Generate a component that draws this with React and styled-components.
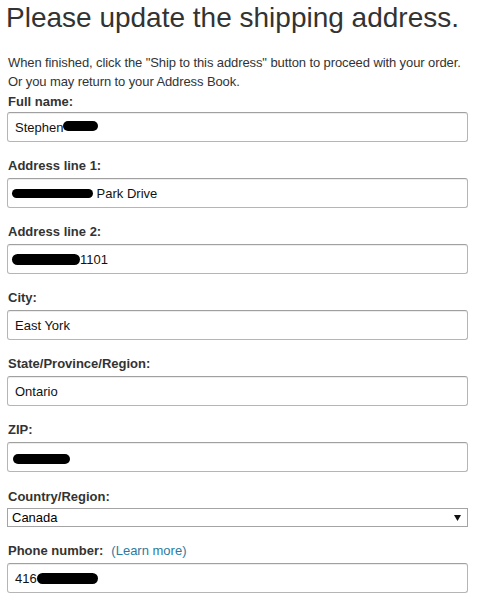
import React from 'react';
import styled, { createGlobalStyle } from 'styled-components';

const GlobalStyle = createGlobalStyle`
    body {
        margin: 0;
        background: #fff;
        font-family: "Liberation Sans", Arial, sans-serif;
        color: #333;
    }
`;

const Page = styled.div`
    padding: 0 20px 0 7px;
`;

const Title = styled.h1`
    margin: 1px 0 0 -1px;
    font-size: 28px;
    line-height: 34px;
    font-weight: 400;
    color: #333;
`;

const Intro = styled.p`
    margin: 18px 0 0 1px;
    font-size: 13px;
    line-height: 19px;
    letter-spacing: -0.1px;
    white-space: nowrap;
    color: #333;
`;

const Field = styled.div`
    margin-top: ${(p) => p.$top}px;
`;

const Label = styled.div`
    padding-left: 1px;
    margin-bottom: ${(p) => p.$mb}px;
    font-size: 13px;
    line-height: 19px;
    font-weight: 700;
    color: #333;
`;

const Link = styled.a`
    margin-left: 8px;
    font-weight: 400;
    color: #2d7aa0;
    text-decoration: none;
`;

const TextBox = styled.div`
    box-sizing: border-box;
    height: 30px;
    display: flex;
    align-items: center;
    padding: 0 7px;
    border: 1px solid #b5b5b5;
    border-top-color: #a0a0a0;
    border-radius: 3px;
    box-shadow: 0 1px 0 rgba(255, 255, 255, 0.5), inset 0 1px 0 rgba(0, 0, 0, 0.07);
    font-size: 13px;
    color: #111;
    white-space: pre;
`;

const Redact = styled.span`
    display: inline-block;
    width: ${(p) => p.$w}px;
    height: ${(p) => p.$h || 10}px;
    margin-top: ${(p) => p.$dy || 0}px;
    background: #000;
    border-radius: 6px;
`;

const Select = styled.div`
    box-sizing: border-box;
    height: 19px;
    display: flex;
    align-items: center;
    justify-content: space-between;
    padding: 0 6px 0 4px;
    border: 1px solid #a4a4a4;
    font-size: 13px;
    color: #000;
`;

function Arrow() {
    return (
        <svg width="7" height="6" viewBox="0 0 7 6">
            <polygon points="0,0 7,0 3.5,6" fill="#111" />
        </svg>
    );
}

function App() {
    return (
        <Page>
            <GlobalStyle />
            <Title>Please update the shipping address.</Title>
            <Intro>
                When finished, click the "Ship to this address" button to proceed with your order.
                <br />
                Or you may return to your Address Book.
            </Intro>

            <Field $top={1}>
                <Label $mb={1}>Full name:</Label>
                <TextBox>
                    Stephen<Redact $w={35} $dy={-2} />
                </TextBox>
            </Field>

            <Field $top={14}>
                <Label $mb={3}>Address line 1:</Label>
                <TextBox>
                    <Redact $w={81} $h={9} $dy={1} style={{ marginLeft: -3 }} /> Park Drive
                </TextBox>
            </Field>

            <Field $top={14}>
                <Label $mb={3}>Address line 2:</Label>
                <TextBox>
                    <Redact $w={68} $h={11} style={{ marginLeft: -3 }} />1101
                </TextBox>
            </Field>

            <Field $top={14}>
                <Label $mb={3}>City:</Label>
                <TextBox>East York</TextBox>
            </Field>

            <Field $top={14}>
                <Label $mb={3}>State/Province/Region:</Label>
                <TextBox>Ontario</TextBox>
            </Field>

            <Field $top={14}>
                <Label $mb={3}>ZIP:</Label>
                <TextBox>
                    <Redact $w={57} $dy={4} style={{ marginLeft: -2 }} />
                </TextBox>
            </Field>

            <Field $top={15}>
                <Label $mb={2}>Country/Region:</Label>
                <Select>
                    Canada
                    <Arrow />
                </Select>
            </Field>

            <Field $top={14}>
                <Label $mb={3}>
                    Phone number:<Link href="#">(Learn more)</Link>
                </Label>
                <TextBox>
                    416<Redact $w={61} $h={11} $dy={1} />
                </TextBox>
            </Field>
        </Page>
    );
}

export default App;
